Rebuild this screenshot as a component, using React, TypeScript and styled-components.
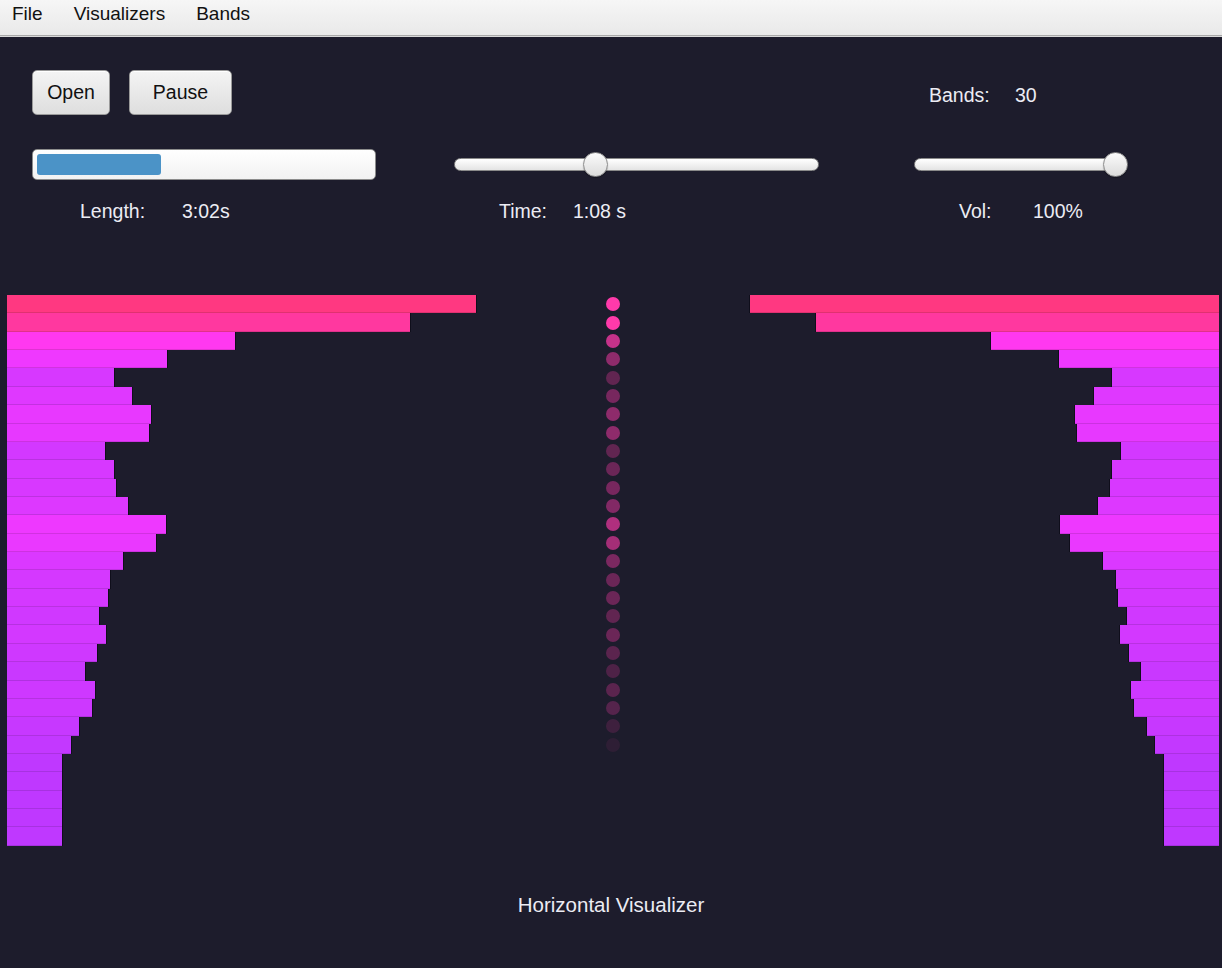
import React from 'react';
import styled, { createGlobalStyle } from 'styled-components';

const GlobalStyle = createGlobalStyle`
  html, body {
    margin: 0;
    padding: 0;
    background: #1d1c2c;
  }
  body {
    font-family: "Liberation Sans", Arial, sans-serif;
  }
`;

// band magnitudes in px (left and right are mirrored)
const bands = [
  469, 403, 228, 160, 107, 125, 144, 142, 98, 107,
  109, 121, 159, 149, 116, 103, 101, 92, 99, 90,
  78, 88, 85, 72, 64, 55, 55, 55, 55, 55,
];

// peak dot opacity per band
const peaks = [
  1, 1, 0.75, 0.5, 0.3, 0.4, 0.5, 0.5, 0.3, 0.35,
  0.4, 0.45, 0.65, 0.6, 0.42, 0.35, 0.35, 0.3, 0.35, 0.28,
  0.22, 0.28, 0.25, 0.15, 0.08, 0, 0, 0, 0, 0,
];

const MAX = 469;

function bandColor(w: number) {
  const t = w / MAX;
  const hue = 273 + 65 * t;
  return `hsl(${hue.toFixed(1)}, 100%, 61%)`;
}

const Page = styled.div`
  min-height: 100vh;
  display: flex;
  flex-direction: column;
  background: #1d1c2c;
`;

const MenuBar = styled.div`
  height: 35px;
  display: flex;
  align-items: center;
  gap: 31px;
  padding-left: 12px;
  background: linear-gradient(#f6f6f6, #e9e9e9);
  border-bottom: 1px solid #a9a9a9;
  box-shadow: 0 1px 0 #d8d8d8;
`;

const MenuItem = styled.span`
  font-size: 19px;
  color: #111;
  margin-top: -8px;
`;

const Controls = styled.div`
  display: flex;
  padding: 34px 0 0 32px;
`;

const Column = styled.div<{ $width: number; $offset: number }>`
  width: ${({ $width }) => $width}px;
  margin-left: ${({ $offset }) => $offset}px;
  display: flex;
  flex-direction: column;
`;

const TopRow = styled.div`
  height: 45px;
  display: flex;
  align-items: center;
  gap: 19px;
`;

const ControlRow = styled.div`
  height: 31px;
  margin-top: 34px;
  display: flex;
  align-items: center;
`;

const Button = styled.button<{ $width: number }>`
  width: ${({ $width }) => $width}px;
  height: 45px;
  font-family: inherit;
  font-size: 19.5px;
  color: #111;
  background: linear-gradient(#f4f4f4, #dedede);
  border: 1px solid #9a9a9a;
  border-radius: 5px;
  box-shadow: inset 0 1px 0 #ffffff;
  padding: 0;
`;

const Progress = styled.div`
  width: 100%;
  height: 31px;
  box-sizing: border-box;
  padding: 4px;
  border: 1px solid #8c8c8c;
  border-radius: 5px;
  background: linear-gradient(#ffffff, #f2f2f2);
`;

const ProgressFill = styled.div`
  height: 100%;
  border-radius: 3px;
  background: #4b93c7;
`;

const Track = styled.div`
  position: relative;
  width: 100%;
  height: 13px;
  box-sizing: border-box;
  border: 1px solid #8a8a8a;
  border-radius: 7px;
  background: linear-gradient(#ffffff, #e4e4e4);
`;

const Thumb = styled.div`
  position: absolute;
  top: 50%;
  width: 25px;
  height: 25px;
  box-sizing: border-box;
  margin: -12.5px 0 0 -12.5px;
  border-radius: 50%;
  border: 1px solid #8d8d8d;
  background: linear-gradient(#fbfbfb, #dcdcdc);
  box-shadow: 0 1px 1px rgba(0, 0, 0, 0.3);
`;

const InfoRow = styled.div<{ $indent: number; $top?: number }>`
  display: flex;
  align-items: center;
  height: 22px;
  padding-left: ${({ $indent }) => $indent}px;
  margin-top: ${({ $top = 20 }) => $top}px;
  font-size: 19.5px;
  color: #ececf4;
`;

const InfoLabel = styled.span<{ $width: number }>`
  width: ${({ $width }) => $width}px;
  flex: none;
`;

const Visualizer = styled.div`
  display: grid;
  grid-template-columns: 1fr 14px 1fr;
  height: 551px;
  margin-top: 73px;
  padding: 0 3px 0 7px;
`;

const BarStack = styled.div<{ $side: 'left' | 'right' }>`
  display: flex;
  flex-direction: column;
  align-items: ${({ $side }) => ($side === 'left' ? 'flex-start' : 'flex-end')};
`;

const Bar = styled.div<{ $side: 'left' | 'right' }>`
  flex: 1;
  box-shadow: inset 0 -1px 0 rgba(0, 0, 0, 0.12),
    ${({ $side }) => ($side === 'left' ? '1px' : '-1px')} 0 0 rgba(10, 8, 20, 0.7);
`;

const DotStack = styled.div`
  display: flex;
  flex-direction: column;
`;

const DotCell = styled.div`
  flex: 1;
  display: flex;
  align-items: center;
  justify-content: center;
`;

const Dot = styled.div`
  width: 14px;
  height: 14px;
  flex: none;
  border-radius: 50%;
  background: #ff3aaa;
`;

const Caption = styled.div`
  margin-top: 47px;
  text-align: center;
  font-size: 20.5px;
  color: #ececf4;
`;

export default function App() {
  return (
    <Page>
      <GlobalStyle />
      <MenuBar>
        <MenuItem>File</MenuItem>
        <MenuItem>Visualizers</MenuItem>
        <MenuItem>Bands</MenuItem>
      </MenuBar>

      <Controls>
        <Column $width={344} $offset={0}>
          <TopRow>
            <Button $width={78}>Open</Button>
            <Button $width={103}>Pause</Button>
          </TopRow>
          <ControlRow>
            <Progress>
              <ProgressFill style={{ width: '37%' }} />
            </Progress>
          </ControlRow>
          <InfoRow $indent={48}>
            <InfoLabel $width={102}>Length:</InfoLabel>
            <span>3:02s</span>
          </InfoRow>
        </Column>

        <Column $width={365} $offset={78}>
          <TopRow />
          <ControlRow>
            <Track>
              <Thumb style={{ left: '38.6%' }} />
            </Track>
          </ControlRow>
          <InfoRow $indent={45}>
            <InfoLabel $width={74}>Time:</InfoLabel>
            <span>1:08 s</span>
          </InfoRow>
        </Column>

        <Column $width={213} $offset={95}>
          <TopRow>
            <InfoRow $indent={15} $top={6}>
              <InfoLabel $width={86}>Bands:</InfoLabel>
              <span>30</span>
            </InfoRow>
          </TopRow>
          <ControlRow>
            <Track>
              <Thumb style={{ left: '94.8%' }} />
            </Track>
          </ControlRow>
          <InfoRow $indent={45}>
            <InfoLabel $width={74}>Vol:</InfoLabel>
            <span>100%</span>
          </InfoRow>
        </Column>
      </Controls>

      <Visualizer>
        <BarStack $side="left">
          {bands.map((w, i) => (
            <Bar key={i} $side="left" style={{ width: w, background: bandColor(w) }} />
          ))}
        </BarStack>
        <DotStack>
          {peaks.map((a, i) => (
            <DotCell key={i}>
              <Dot style={{ opacity: a }} />
            </DotCell>
          ))}
        </DotStack>
        <BarStack $side="right">
          {bands.map((w, i) => (
            <Bar key={i} $side="right" style={{ width: w, background: bandColor(w) }} />
          ))}
        </BarStack>
      </Visualizer>

      <Caption>Horizontal Visualizer</Caption>
    </Page>
  );
}
